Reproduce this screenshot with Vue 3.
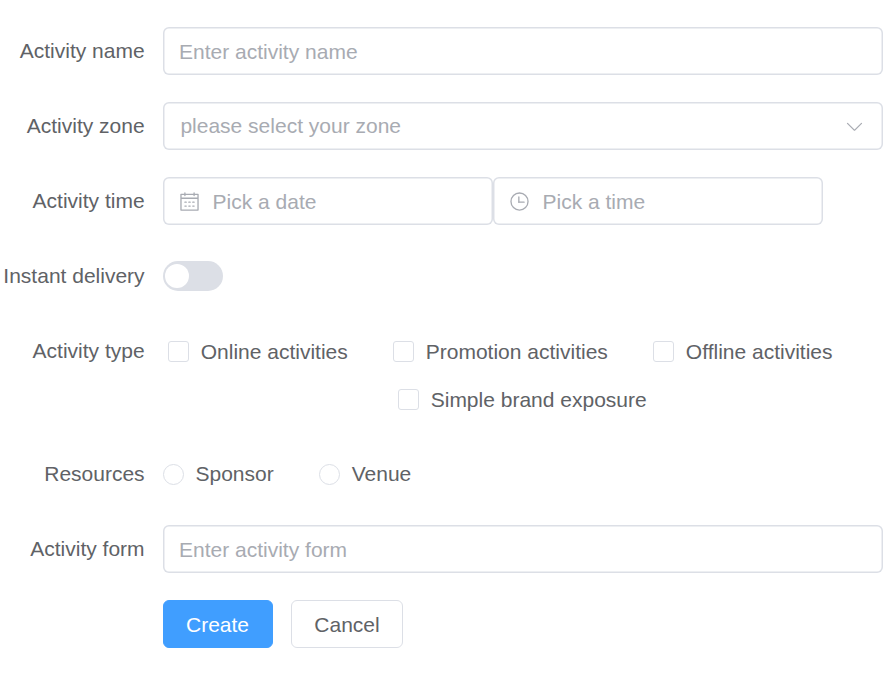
<script setup>
import { reactive } from 'vue'

const form = reactive({
  name: '',
  date: '',
  time: '',
  delivery: false,
  types: [],
  resource: '',
  desc: ''
})

const typeRows = [
  ['Online activities', 'Promotion activities', 'Offline activities'],
  ['Simple brand exposure']
]
const resources = ['Sponsor', 'Venue']
</script>

<template>
  <form class="form" @submit.prevent>
    <div class="item">
      <label class="label">Activity name</label>
      <div class="field wide">
        <input v-model="form.name" class="inner" placeholder="Enter activity name" />
      </div>
    </div>

    <div class="item">
      <label class="label">Activity zone</label>
      <div class="field wide select">
        <span class="placeholder">please select your zone</span>
        <svg class="icon" viewBox="0 0 1024 1024">
          <path d="M831.872 340.864 512 652.672 192.128 340.864a30.592 30.592 0 0 0-42.752 0 29.12 29.12 0 0 0 0 41.6L489.664 714.24a32 32 0 0 0 44.672 0l340.288-331.712a29.12 29.12 0 0 0 0-41.728 30.592 30.592 0 0 0-42.752 0z" />
        </svg>
      </div>
    </div>

    <div class="item">
      <label class="label">Activity time</label>
      <div class="field half">
        <svg class="icon" viewBox="0 0 1024 1024">
          <path d="M128 384v512h768V192H768v32a32 32 0 1 1-64 0v-32H320v32a32 32 0 0 1-64 0v-32H128v128h768v64zm192-256h384V96a32 32 0 1 1 64 0v32h160a32 32 0 0 1 32 32v768a32 32 0 0 1-32 32H96a32 32 0 0 1-32-32V160a32 32 0 0 1 32-32h160V96a32 32 0 0 1 64 0zm-32 384h64a32 32 0 0 1 0 64h-64a32 32 0 0 1 0-64m0 192h64a32 32 0 1 1 0 64h-64a32 32 0 1 1 0-64m192-192h64a32 32 0 0 1 0 64h-64a32 32 0 0 1 0-64m0 192h64a32 32 0 1 1 0 64h-64a32 32 0 1 1 0-64m192-192h64a32 32 0 1 1 0 64h-64a32 32 0 1 1 0-64m0 192h64a32 32 0 1 1 0 64h-64a32 32 0 1 1 0-64" />
        </svg>
        <input v-model="form.date" class="inner" placeholder="Pick a date" />
      </div>
      <div class="field half">
        <svg class="icon" viewBox="0 0 1024 1024">
          <path d="M512 896a384 384 0 1 0 0-768 384 384 0 0 0 0 768m0 64a448 448 0 1 1 0-896 448 448 0 0 1 0 896" />
          <path d="M480 256a32 32 0 0 1 32 32v256a32 32 0 0 1-64 0V288a32 32 0 0 1 32-32" />
          <path d="M480 512h256q32 0 32 32t-32 32H480q-32 0-32-32t32-32" />
        </svg>
        <input v-model="form.time" class="inner" placeholder="Pick a time" />
      </div>
    </div>

    <div class="item">
      <label class="label">Instant delivery</label>
      <div class="switch" :class="{ on: form.delivery }" @click="form.delivery = !form.delivery">
        <span class="knob"></span>
      </div>
    </div>

    <div class="item">
      <label class="label">Activity type</label>
      <div class="checks">
        <div v-for="(row, i) in typeRows" :key="i" class="check-row">
          <label v-for="t in row" :key="t" class="option">
            <input v-model="form.types" type="checkbox" class="box" :value="t" />
            <span class="option-text">{{ t }}</span>
          </label>
        </div>
      </div>
    </div>

    <div class="item">
      <label class="label">Resources</label>
      <div class="radios">
        <label v-for="r in resources" :key="r" class="option">
          <input v-model="form.resource" type="radio" class="box round" :value="r" />
          <span class="radio-text">{{ r }}</span>
        </label>
      </div>
    </div>

    <div class="item">
      <label class="label">Activity form</label>
      <div class="field wide">
        <input v-model="form.desc" class="inner" placeholder="Enter activity form" />
      </div>
    </div>

    <div class="item actions">
      <button class="btn primary" type="submit">Create</button>
      <button class="btn" type="button">Cancel</button>
    </div>
  </form>
</template>

<style>
body {
  background: #fff;
}
</style>

<style scoped>
.form {
  box-sizing: border-box;
  width: 883px;
  padding-top: 27px;
  display: flex;
  flex-direction: column;
  gap: 27px;
  font-family: "Liberation Sans", Arial, sans-serif;
  font-size: 21px;
  color: #606266;
}
.item {
  display: flex;
  align-items: flex-start;
  min-height: 48px;
}
.label {
  box-sizing: border-box;
  flex: none;
  width: 163px;
  padding-right: 18.4px;
  height: 48px;
  line-height: 48px;
  text-align: right;
  white-space: nowrap;
}
.field {
  box-sizing: border-box;
  display: flex;
  align-items: center;
  height: 48px;
  padding: 0 16px;
  border-radius: 6px;
  box-shadow: 0 0 0 1.5px #dcdfe6 inset;
}
.wide {
  flex: 1;
}
.half {
  width: 330px;
  gap: 12.5px;
}
.select {
  justify-content: space-between;
  padding: 0 18px 0 17.4px;
}
.placeholder {
  line-height: 48px;
  color: #a8abb2;
}
.inner {
  flex: 1;
  min-width: 0;
  height: 46px;
  margin-top: 2px;
  padding: 0;
  border: 0;
  outline: 0;
  background: none;
  font: inherit;
  color: #606266;
}
.inner::placeholder {
  color: #a8abb2;
  opacity: 1;
}
.icon {
  flex: none;
  width: 21px;
  height: 21px;
  fill: #a8abb2;
}
.switch {
  box-sizing: border-box;
  display: flex;
  align-items: center;
  width: 60px;
  height: 30px;
  margin-top: 9px;
  padding: 0 2px;
  border-radius: 15px;
  background: #dcdfe6;
}
.switch.on {
  justify-content: flex-end;
  background: #409eff;
}
.knob {
  width: 24px;
  height: 24px;
  border-radius: 50%;
  background: #fff;
}
.checks {
  padding-left: 5px;
}
.check-row,
.radios {
  display: flex;
  gap: 45px;
}
.check-row + .check-row {
  padding-left: 230px;
}
.option {
  display: flex;
  align-items: center;
  gap: 12px;
  height: 48px;
  white-space: nowrap;
}
.option-text {
  margin: 0 0.3px 0 -0.3px;
  padding-top: 2px;
}
.radio-text {
  margin: 0 0.5px 0 -0.5px;
}
.box {
  appearance: none;
  box-sizing: border-box;
  flex: none;
  width: 21px;
  height: 21px;
  margin: 0;
  border: 1px solid #dcdfe6;
  border-radius: 3px;
  background: #fff;
}
.box.round {
  border-radius: 50%;
}
.box:checked {
  border-color: #409eff;
  background: #409eff;
}
.actions {
  padding-left: 163px;
  gap: 18px;
}
.btn {
  box-sizing: border-box;
  width: 112px;
  height: 48px;
  padding: 2px 0 0;
  border: 1px solid #dcdfe6;
  border-radius: 6px;
  background: #fff;
  font: inherit;
  color: #606266;
}
.btn.primary {
  width: 110px;
  padding-right: 1px;
  border-color: #409eff;
  background: #409eff;
  color: #fff;
}
</style>
